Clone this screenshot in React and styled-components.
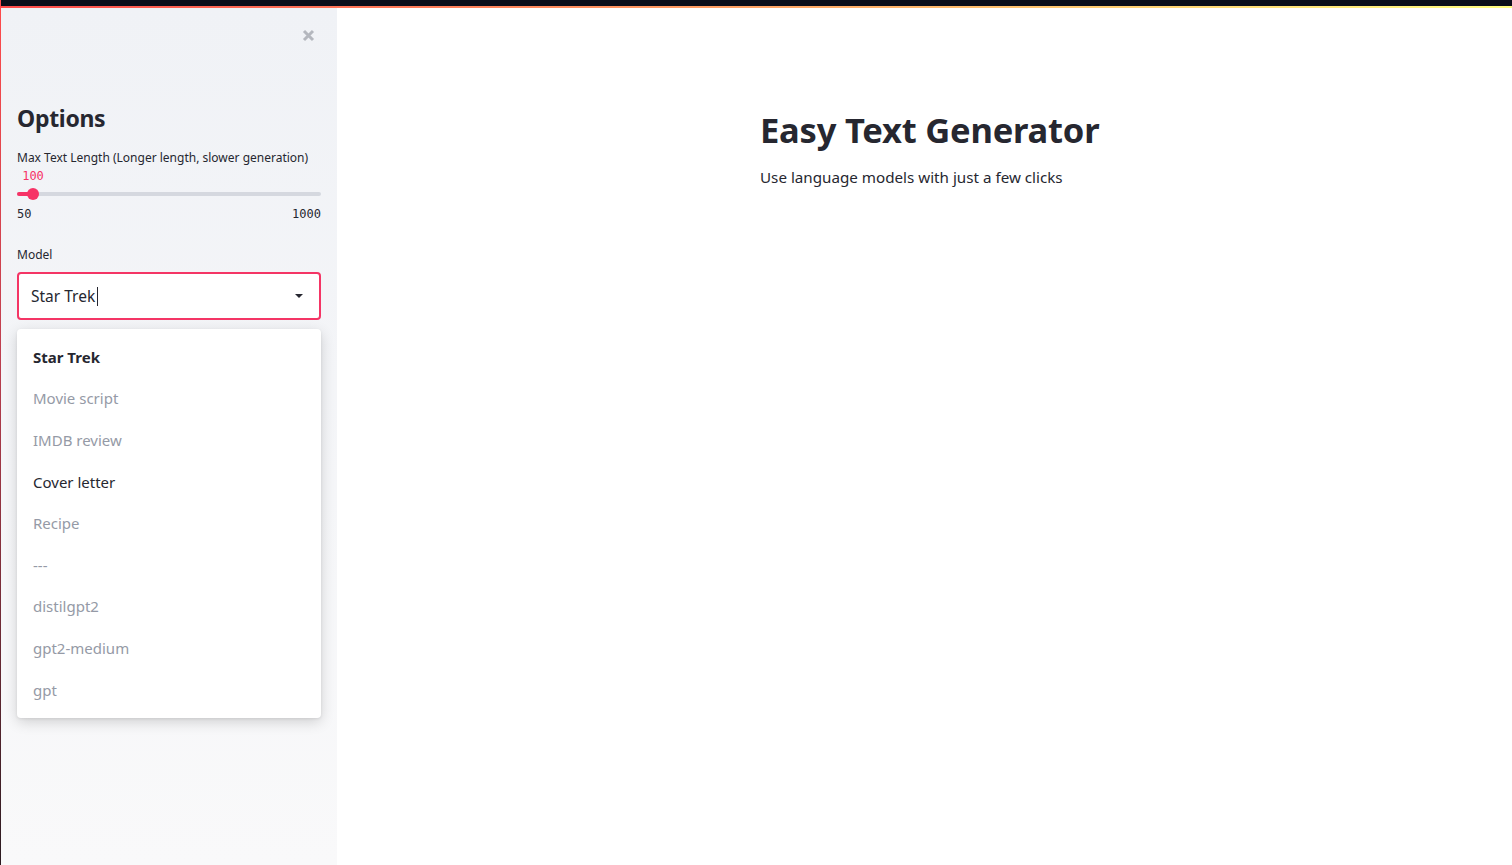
import { useState } from "react";
import styled, { createGlobalStyle } from "styled-components";

const GlobalStyle = createGlobalStyle`
  html, body {
    margin: 0;
    padding: 0;
    background: #ffffff;
  }
  body {
    font-family: "Noto Sans", "Open Sans", sans-serif;
    color: #262730;
  }
`;

const Page = styled.div`
  display: flex;
  flex-direction: column;
  height: 865px;
  overflow: hidden;
  border-left: 1px solid transparent;
  border-image: linear-gradient(180deg, #ff4b4b 0%, #c04050 40%, #2a1a20 100%) 1;
`;

const TopBar = styled.div`
  flex: none;
  height: 6px;
  background: #0b0e1a;
`;

const Decoration = styled.div`
  flex: none;
  height: 2px;
  background: linear-gradient(90deg, #ff4b4b, #fffd80);
`;

const Body = styled.div`
  flex: 1;
  display: flex;
  min-height: 0;
`;

const Sidebar = styled.aside`
  flex: none;
  width: 336px;
  background: linear-gradient(180deg, #f0f2f6 0%, #f9f9fa 100%);
  padding: 0 16px;
  box-sizing: border-box;
  display: flex;
  flex-direction: column;
`;

const CloseRow = styled.div`
  display: flex;
  justify-content: flex-end;
  height: 56px;
  padding: 19px 5px 0 0;
  box-sizing: border-box;
`;

const CloseButton = styled.button`
  border: none;
  background: none;
  padding: 0;
  width: 16px;
  height: 16px;
  display: flex;
  align-items: center;
  justify-content: center;
  cursor: pointer;
`;

const SideTitle = styled.h2`
  margin: 38px 0 0;
  font-size: 23px;
  font-weight: 700;
  line-height: 32px;
  color: #262730;
  letter-spacing: -0.3px;
`;

const Label = styled.div`
  font-size: 12px;
  line-height: 16px;
  color: #262730;
  margin-top: ${(p) => p.$top || 0}px;
`;

const SliderBox = styled.div`
  display: flex;
  flex-direction: column;
  padding-top: 2px;
`;

const ValueRow = styled.div`
  height: 16px;
  position: relative;
`;

const Mono = styled.span`
  font-family: "DejaVu Sans Mono", "Liberation Mono", monospace;
  font-size: 12px;
  line-height: 16px;
  color: ${(p) => p.$color || "#262730"};
`;

const Floating = styled(Mono)`
  position: absolute;
  top: 0;
  transform: translateX(-50%);
`;

const Track = styled.div`
  position: relative;
  height: 4px;
  margin: 8px 0 10px;
  border-radius: 2px;
  background: #d5d8df;
`;

const Fill = styled.div`
  height: 100%;
  border-radius: 2px;
  background: #f63366;
`;

const Thumb = styled.div`
  position: absolute;
  top: 50%;
  width: 12px;
  height: 12px;
  border-radius: 50%;
  background: #f63366;
  transform: translate(-50%, -50%);
`;

const Ends = styled.div`
  display: flex;
  justify-content: space-between;
`;

const SelectBox = styled.div`
  margin-top: 9px;
  height: 48px;
  box-sizing: border-box;
  border: 2px solid #f43565;
  border-radius: 4px;
  background: #ffffff;
  display: flex;
  align-items: center;
  padding: 0 12px;
`;

const SelectText = styled.span`
  font-size: 15.5px;
  color: #262730;
  flex: 1;
  display: flex;
  align-items: center;
`;

const Caret = styled.span`
  display: inline-block;
  width: 1px;
  height: 19px;
  background: #262730;
  margin-left: 2px;
`;

const Arrow = styled.span`
  width: 0;
  height: 0;
  border-left: 4px solid transparent;
  border-right: 4px solid transparent;
  border-top: 4px solid #262730;
  margin-right: 4px;
`;

const Menu = styled.ul`
  list-style: none;
  margin: 9px 0 0;
  padding: 7px 0 8px;
  background: #ffffff;
  border-radius: 4px;
  box-shadow: 0 4px 14px rgba(0, 0, 0, 0.16), 0 1px 3px rgba(0, 0, 0, 0.08);
`;

const Item = styled.li`
  height: 41.6px;
  display: flex;
  align-items: center;
  padding: 0 16px;
  font-size: 15px;
  font-weight: ${(p) => (p.$selected ? 700 : 400)};
  color: ${(p) => (p.$active ? "#262730" : "#959aa6")};
  cursor: pointer;
`;

const Main = styled.main`
  flex: 1;
  padding: 94px 0 0 423px;
`;

const Title = styled.h1`
  margin: 0;
  font-size: 34.5px;
  font-weight: 700;
  line-height: 56px;
  color: #262730;
  letter-spacing: -0.2px;
`;

const Subtitle = styled.p`
  margin: 7px 0 0;
  font-size: 15.2px;
  line-height: 24px;
  color: #262730;
`;

const options = [
  "Star Trek",
  "Movie script",
  "IMDB review",
  "Cover letter",
  "Recipe",
  "---",
  "distilgpt2",
  "gpt2-medium",
  "gpt",
];

function Slider({ min, max, value }) {
  const pct = ((value - min) / (max - min)) * 100;
  return (
    <SliderBox>
      <ValueRow>
        <Floating $color="#f63366" style={{ left: `${pct}%` }}>
          {value}
        </Floating>
      </ValueRow>
      <Track>
        <Fill style={{ width: `${pct}%` }} />
        <Thumb style={{ left: `${pct}%` }} />
      </Track>
      <Ends>
        <Mono>{min}</Mono>
        <Mono>{max}</Mono>
      </Ends>
    </SliderBox>
  );
}

export default function App() {
  const [model] = useState("Star Trek");

  return (
    <Page>
      <GlobalStyle />
      <TopBar />
      <Decoration />
      <Body>
        <Sidebar>
          <CloseRow>
            <CloseButton aria-label="close sidebar">
              <svg width="13" height="13" viewBox="0 0 13 13">
                <path d="M2 2 L11 11 M11 2 L2 11" stroke="#b4b7be" strokeWidth="3" />
              </svg>
            </CloseButton>
          </CloseRow>
          <SideTitle>Options</SideTitle>
          <Label $top={16}>Max Text Length (Longer length, slower generation)</Label>
          <Slider min={50} max={1000} value={100} />
          <Label $top={25}>Model</Label>
          <SelectBox>
            <SelectText>
              {model}
              <Caret />
            </SelectText>
            <Arrow />
          </SelectBox>
          <Menu>
            {options.map((o) => (
              <Item
                key={o}
                $selected={o === model}
                $active={o === model || o === "Cover letter"}
              >
                {o}
              </Item>
            ))}
          </Menu>
        </Sidebar>
        <Main>
          <Title>Easy Text Generator</Title>
          <Subtitle>Use language models with just a few clicks</Subtitle>
        </Main>
      </Body>
    </Page>
  );
}
